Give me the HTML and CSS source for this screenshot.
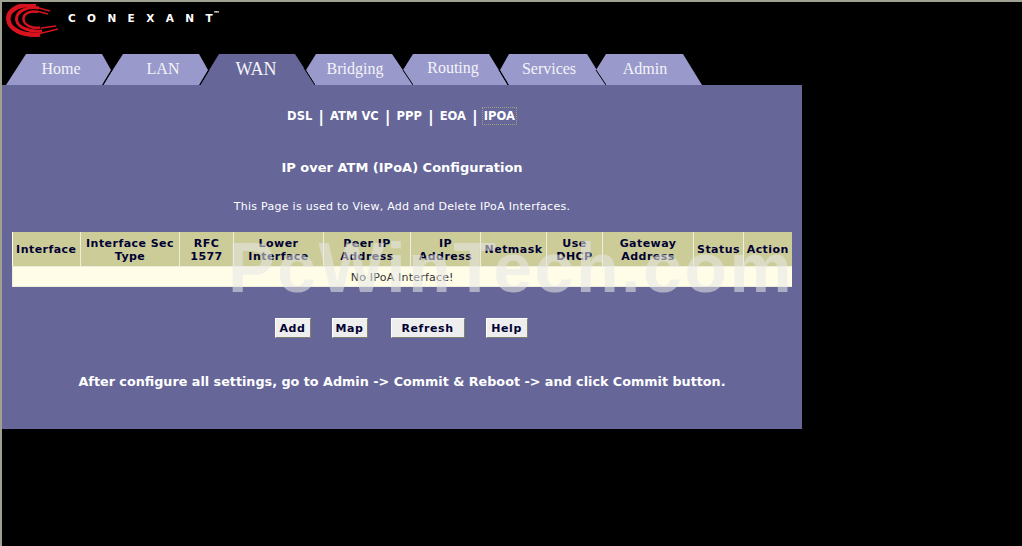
FILE: index.html
```html
<!DOCTYPE html>
<html lang="en">
<head>
  <meta charset="UTF-8">
  <title>IP over ATM (IPoA) Configuration</title>
  <link rel="stylesheet" href="styles.css">
</head>
<body>

<div class="logo-bar">
  <svg class="logo-mark" width="54" height="34" viewBox="0 0 54 34">
    <g fill="none" stroke="#d8121f">
      <path d="M30 1.5 C12 -1 1 7 2.5 16 C3 25 16 32 34 30.5" stroke-width="4.5"/>
      <path d="M33 4 C20 2 10 8 10.5 15.5 C11 23 22 28 36 27" stroke-width="3"/>
      <path d="M32 8 C24 6 17 10 17.5 15.5 C18 21 26 25 34 23.5" stroke-width="2.5"/>
      <path d="M31 3.5 L44 7 M32 7.5 L42 10 M35 24 L50 22 M34 29.5 L52 25" stroke-width="1.4"/>
    </g>
  </svg>
  <span class="logo-text">CONEXANT</span><span class="logo-tm">&#8482;</span>
</div>

<div class="tabs">
  <a class="tab tab-home">
    <svg width="105" height="31" viewBox="0 0 105 31"><polygon points="0,31 20,0 96,0 105,16 96,31" fill="#9999cc"/></svg>
    <span>Home</span>
  </a>
  <a class="tab tab-lan">
    <svg width="105" height="31" viewBox="0 0 105 31"><polygon points="0,31 20,0 96,0 105,16 96,31" fill="#9999cc"/><path d="M0 31 L9 16" stroke="#000" fill="none"/></svg>
    <span>LAN</span>
  </a>
  <a class="tab tab-wan">
    <svg width="115" height="31" viewBox="0 0 115 31"><polygon points="0,31 19,0 95,0 115,31" fill="#666699"/><path d="M0 31 L9 16 M104 14 L115 31" stroke="#000" fill="none"/></svg>
    <span>WAN</span>
  </a>
  <a class="tab tab-bridging">
    <svg width="107" height="31" viewBox="0 0 107 31"><polygon points="0,16 10,0 86,0 107,31 9,31" fill="#9999cc"/><path d="M97 16 L107 31" stroke="#000" fill="none"/></svg>
    <span>Bridging</span>
  </a>
  <a class="tab tab-routing">
    <svg width="105" height="31" viewBox="0 0 105 31"><polygon points="0,16 10,0 86,0 105,31 9,31" fill="#9999cc"/><path d="M96 16 L105 31" stroke="#000" fill="none"/></svg>
    <span>Routing</span>
  </a>
  <a class="tab tab-services">
    <svg width="106" height="31" viewBox="0 0 106 31"><polygon points="0,16 9,0 87,0 106,31 9,31" fill="#9999cc"/><path d="M96 16 L106 31" stroke="#000" fill="none"/></svg>
    <span>Services</span>
  </a>
  <a class="tab tab-admin">
    <svg width="106" height="31" viewBox="0 0 106 31"><polygon points="0,16 10,0 87,0 106,31 9,31" fill="#9999cc"/></svg>
    <span>Admin</span>
  </a>
</div>

<div class="panel">
  <div class="sub-nav">
    <a>DSL</a><span class="sep">|</span><a>ATM VC</a><span class="sep">|</span><a>PPP</a><span class="sep">|</span><a>EOA</a><span class="sep">|</span><a class="current">IPOA</a>
  </div>

  <h1 class="page-title">IP over ATM (IPoA) Configuration</h1>
  <p class="page-desc">This Page is used to View, Add and Delete IPoA Interfaces.</p>

  <table class="ipoa-table">
    <colgroup>
      <col class="c-68"><col class="c-99"><col class="c-54"><col class="c-90"><col class="c-87"><col class="c-70"><col class="c-66"><col class="c-56"><col class="c-91"><col class="c-50"><col class="c-49">
    </colgroup>
    <tr>
      <th>Interface</th>
      <th>Interface Sec<br>Type</th>
      <th>RFC<br>1577</th>
      <th>Lower<br>Interface</th>
      <th>Peer IP<br>Address</th>
      <th>IP<br>Address</th>
      <th>Netmask</th>
      <th>Use<br>DHCP</th>
      <th>Gateway<br>Address</th>
      <th>Status</th>
      <th>Action</th>
    </tr>
    <tr>
      <td colspan="11">No IPoA Interface!</td>
    </tr>
  </table>

  <div class="actions">
    <button class="btn btn-add">Add</button>
    <button class="btn btn-map">Map</button>
    <button class="btn btn-refresh">Refresh</button>
    <button class="btn btn-help">Help</button>
  </div>

  <p class="commit-note">After configure all settings, go to Admin -&gt; Commit &amp; Reboot -&gt; and click Commit button.</p>

  <div class="watermark">PcWinTech.com</div>
</div>

</body>
</html>
```

FILE: styles.css
```css
html, body {
  margin: 0;
  height: 100%;
  overflow: hidden;
  background: #000;
}
body {
  box-sizing: border-box;
  border-top: 2px solid #a0a090;
  border-left: 2px solid #a0a090;
  font-family: "DejaVu Sans", Verdana, sans-serif;
}

/* logo */
.logo-bar {
  display: flex;
  align-items: flex-start;
  height: 52px;
  padding-left: 4px;
}
.logo-mark {
  margin-top: 2px;
}
.logo-text {
  margin: 10px 0 0 8px;
  font-weight: bold;
  font-size: 10.5px;
  letter-spacing: 11.4px;
  color: #fff;
  line-height: 12px;
}
.logo-tm {
  margin: 8px 0 0 -11px;
  font-size: 7px;
  line-height: 8px;
  font-weight: bold;
  color: #fff;
}

/* tabs */
.tabs {
  display: flex;
  height: 31px;
  padding-left: 4px;
}
.tab {
  position: relative;
  display: block;
  height: 31px;
  margin-right: -9px;
  font-family: "Liberation Serif", "Times New Roman", serif;
  font-size: 16px;
  line-height: 30px;
  color: #f4f4f8;
  text-align: center;
  flex: none;
}
.tab svg {
  position: absolute;
  left: 0;
  top: 0;
  display: block;
}
.tab span {
  position: relative;
}
.tab-home { width: 105px; margin-right: -8px; padding-left: 5px; box-sizing: border-box; z-index: 1; }
.tab-lan { width: 105px; margin-right: -8px; padding-left: 15px; box-sizing: border-box; z-index: 2; }
.tab-wan { width: 115px; font-size: 18px; padding-right: 3px; box-sizing: border-box; z-index: 7; }
.tab-bridging { width: 107px; margin-right: -10px; padding-right: 9px; box-sizing: border-box; z-index: 6; }
.tab-routing { width: 105px; margin-right: -8px; padding-right: 5px; line-height: 28px; box-sizing: border-box; z-index: 5; }
.tab-services { width: 106px; margin-right: -10px; padding-right: 8px; box-sizing: border-box; z-index: 4; }
.tab-admin { width: 106px; padding-right: 8px; box-sizing: border-box; z-index: 3; }

/* main panel */
.panel {
  position: relative;
  display: flex;
  flex-direction: column;
  align-items: center;
  box-sizing: border-box;
  width: 800px;
  height: 344px;
  padding-top: 23px;
  background: #666699;
  color: #fff;
}
.sub-nav {
  display: flex;
  align-items: center;
  height: 16px;
  margin-left: -2px;
  font-size: 11.5px;
  font-weight: bold;
  color: #fff;
}
.sep {
  margin: 0 6px;
  font-size: 16px;
  font-weight: bold;
}
.current {
  outline: 1px dotted #a0a080;
  outline-offset: 1px;
}
.page-title {
  margin: 36px 0 0;
  font-size: 13px;
  line-height: 16px;
  font-weight: bold;
}
.page-desc {
  margin: 24px 0 0;
  font-size: 11px;
  line-height: 14px;
  letter-spacing: 0.28px;
}

/* table */
.ipoa-table {
  align-self: flex-start;
  width: 778px;
  margin: 18px 0 0 10px;
  table-layout: fixed;
  border-collapse: collapse;
  background: #fffde8;
  color: #000;
  font-size: 11px;
}
.c-68 { width: 68px; }
.c-99 { width: 99px; }
.c-54 { width: 54px; }
.c-90 { width: 90px; }
.c-87 { width: 87px; }
.c-70 { width: 70px; }
.c-66 { width: 66px; }
.c-56 { width: 56px; }
.c-91 { width: 91px; }
.c-50 { width: 50px; }
.c-49 { width: 48px; }
.ipoa-table th {
  height: 33px;
  padding: 1px 0 0;
  background: #cccc99;
  border-right: 1px solid #eeeedd;
  border-bottom: 1px solid #eeeedd;
  font-weight: bold;
  line-height: 13px;
  letter-spacing: 0.45px;
  color: #000033;
}
.ipoa-table th:last-child {
  border-right: 0;
}
.ipoa-table td {
  height: 18px;
  padding: 1px 0 0;
  border-left: 1px solid #eeeedd;
  border-bottom: 1px solid #eeeedd;
  text-align: center;
  font-size: 11px;
  letter-spacing: 0.2px;
  color: #333;
}

/* buttons */
.actions {
  display: flex;
  margin-top: 31px;
  margin-left: -2px;
  height: 20px;
}
.btn {
  box-sizing: border-box;
  height: 20px;
  padding: 0;
  background: #eeeeee;
  border: 1px solid;
  border-color: #fff #808070 #808070 #fff;
  font-family: "DejaVu Sans", Verdana, sans-serif;
  font-size: 11px;
  font-weight: bold;
  letter-spacing: 0.6px;
  color: #000033;
}
.btn-add { width: 36px; margin-right: 21px; }
.btn-map { width: 36px; margin-right: 23px; }
.btn-refresh { width: 74px; margin-right: 21px; }
.btn-help { width: 42px; }

.commit-note {
  margin: 36px 0 0;
  font-size: 12.75px;
  line-height: 16px;
  font-weight: bold;
  color: #fff;
}

/* watermark lies over the table */
.watermark {
  position: absolute;
  left: 226px;
  top: 143px;
  font-family: "Liberation Sans", Arial, sans-serif;
  font-size: 70px;
  line-height: 80px;
  letter-spacing: 2.4px;
  font-weight: bold;
  color: rgba(232, 232, 232, 0.55);
  white-space: nowrap;
}
```
